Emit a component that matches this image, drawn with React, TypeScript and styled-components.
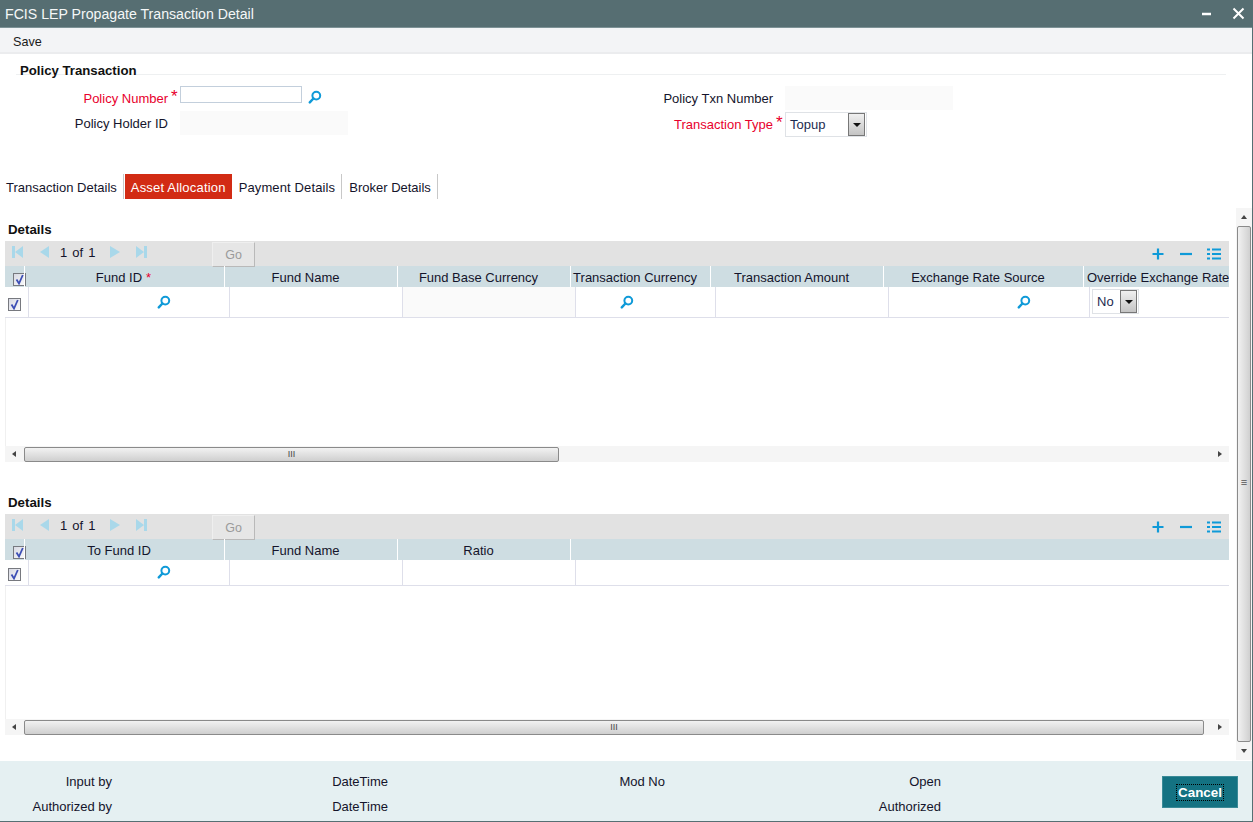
import React from "react";
import styled, { createGlobalStyle } from "styled-components";

const Global = createGlobalStyle`
  html, body { margin: 0; padding: 0; background: #fff; }
  body { font-family: "Liberation Sans", Arial, sans-serif; font-size: 13px; color: #14142b; }
  * { box-sizing: border-box; }
`;

const Page = styled.div`
  width: 1253px; height: 822px; display: flex; flex-direction: column;
  overflow: hidden; background: #fff; border-bottom: 1px solid #566f73; border-right: 1px solid #566f73;
`;
const TitleBar = styled.div`
  height: 28px; flex: none; background: #566e72; color: #f4f7f7; display: flex; align-items: center;
  padding: 0 7px 0 5px; font-size: 14.15px; justify-content: space-between; border-bottom: 1px solid #7d9296;
`;
const WinButtons = styled.div`display: flex; align-items: center; gap: 20px;`;
const MenuBar = styled.div`
  height: 26px; flex: none; background: #f3f4f6; border-bottom: 2px solid #ebecee; padding: 3px 13px 0;
  display: flex; align-items: center; font-size: 12.6px; color: #1a1a1a;
`;
const Section = styled.div`padding: 6px 26px 0 16px; flex: none; height: 120px;`;
const SectionTitle = styled.div`
  font-weight: bold; font-size: 13.2px; height: 15px; line-height: 22px; padding: 0 0 0 4px;
  border-bottom: 1px solid #eef0f1; color: #111;
`;
const FormGrid = styled.div`
  display: grid; grid-template-columns: 604px 1fr; padding-top: 11px;
`;
const FormCol = styled.div`display: flex; flex-direction: column; gap: 1px;`;
const FormRow = styled.div<{ $w: number; $h?: number; $mt?: number }>`
  display: grid; grid-template-columns: ${(p) => p.$w}px 12px auto 1fr; align-items: center;
  height: ${(p) => p.$h ?? 24}px; margin-top: ${(p) => p.$mt ?? 0}px;
`;
const Label = styled.label<{ $req?: boolean }>`
  text-align: right; font-size: 13px; white-space: nowrap; color: ${(p) => (p.$req ? "#e8002d" : "#14142b")};
`;
const Star = styled.span`color: #e8002d; font-size: 17px; line-height: 12px; padding-left: 3px; align-self: start; margin-top: 5px;`;
const TextInput = styled.div`
  width: 122px; height: 17px; background: #fff; border: 1px solid #c3cfdc;
`;
const ReadOnly = styled.div`
  width: 168px; height: 24px; background: #fafafa;
`;
const SearchWrap = styled.span`display: inline-flex; align-items: center; justify-content: center;`;
const SearchNudge = styled.span`display: block; margin-top: 4px;`;
const InputGroup = styled.div`display: flex; align-items: flex-start; gap: 6px; align-self: start;`;
const SelectBox = styled.div<{ $w: number }>`
  width: ${(p) => p.$w}px; height: 25px; border: 1px solid #dfe2e6; background: #fff; display: flex;
  align-items: center; justify-content: space-between; padding: 0 1px 0 4px; font-size: 13px; color: #1c2b50;
`;
const SelectArrow = styled.span`
  width: 17px; height: 23px; border: 1px solid #777; background: linear-gradient(#f0f0f0, #c4c4c4);
  display: flex; align-items: center; justify-content: center;
  &::after { content: ""; border: 4px solid transparent; border-top: 4px solid #111; border-bottom: 0; }
`;
const Tabs = styled.div`display: flex; height: 25px; flex: none;`;
const Tab = styled.div<{ $active?: boolean; $spacing?: number }>`
  padding: ${(p) => (p.$active ? "1px 6px 0" : "1px 6px 0 7px")}; height: 25px; display: flex; align-items: center; font-size: 13px;
  letter-spacing: ${(p) => p.$spacing ?? 0}px;
  margin-left: ${(p) => (p.$active ? "1px" : "0")};
  color: ${(p) => (p.$active ? "#fff" : "#14142b")};
  background: ${(p) => (p.$active ? "#d22b14" : "#fff")};
  border-right: ${(p) => (p.$active ? "0" : "1px solid #c8c8c8")};
  &:first-child { padding-left: 6px; }
`;
const Scroller = styled.div`
  height: 552px; margin-top: 9px; flex: none; display: flex;
`;
const Content = styled.div`width: 1236px; padding-left: 5px; padding-right: 7px;`;
const VBar = styled.div`
  width: 16px; display: flex; flex-direction: column; background: #f5f5f5; flex: none;
`;
const VThumb = styled.div`
  flex: 1; background: linear-gradient(90deg, #f2f2f2, #d0d0d0); border: 1px solid #8a8a8a; border-radius: 2px; 
  display: flex; align-items: center; justify-content: center; font-size: 11px; color: #555; margin: 0 1px; padding-bottom: 4px;
`;
const ArrowBtn = styled.div`
  height: 18px; flex: none; display: flex; align-items: center; justify-content: center;
`;
const Tri = styled.span<{ $dir: "up" | "down" | "left" | "right" }>`
  width: 0; height: 0; border: 3px solid transparent;
  ${(p) => (p.$dir === "up" ? "border-bottom: 4px solid #444; border-top: 0;" : "")}
  ${(p) => (p.$dir === "down" ? "border-top: 4px solid #444; border-bottom: 0;" : "")}
  ${(p) => (p.$dir === "left" ? "border-right: 4px solid #444; border-left: 0;" : "")}
  ${(p) => (p.$dir === "right" ? "border-left: 4px solid #444; border-right: 0;" : "")}
`;
const BlockTitle = styled.div<{ $top: number }>`
  font-weight: bold; font-size: 13.3px; color: #111; padding: ${(p) => p.$top}px 0 0 3px;
  height: ${(p) => p.$top + 19}px; line-height: 15px;
`;
const Toolbar = styled.div`
  height: 25px; background: #e2e2e2; display: flex; align-items: center; padding: 0 8px 0 6px; font-size: 13px;
`;
const Pager = styled.div`display: flex; align-items: center; height: 100%; padding-bottom: 3px;`;
const PageText = styled.span`padding: 0 0 0 9px; word-spacing: 1.5px; color: #14142b; width: 57px; white-space: nowrap;`;
const GoButton = styled.div`
  width: 43px; height: 25px; margin-left: 64px; margin-top: 5px; background: #e6e6e6; border-right: 1px solid #b9b9b9; border-bottom: 1px solid #b9b9b9;
  border-top: 1px solid #efefef; border-left: 1px solid #efefef;
  display: flex; align-items: center; justify-content: center; color: #9a9a9a; font-size: 12.5px;
`;
const ToolIcons = styled.div`margin-left: auto; display: flex; gap: 14px; align-items: center;`;
const HeadRow = styled.div`
  display: grid; height: 21px; background: #cedde2; grid-template-columns: 19px 200px 173px 173px 140px 173px 200px 1fr;
`;
const HeadCell = styled.div`
  border-left: 1px solid #fff; display: flex; align-items: center; justify-content: center; font-size: 13px;
  white-space: nowrap; padding: 1px 11px 0 0; color: #14142b; overflow: hidden;
`;
const LastHeadCell = styled(HeadCell)`justify-content: flex-start; padding: 1px 0 0 3px;`;
const ReqDot = styled.span`color: #e8002d; padding-left: 4px; margin-right: -9px;`;
const DataRow = styled.div<{ $h: number; $cols?: string }>`
  display: grid; height: ${(p) => p.$h}px;
  grid-template-columns: ${(p) => p.$cols ?? "23px 201px 173px 173px 140px 173px 201px 1fr"};
  border-bottom: 1px solid #dedfea; background: #fff;
`;
const DataCell = styled.div<{ $ro?: boolean }>`
  border-left: 1px solid #dedfea; display: flex; align-items: center; justify-content: center; padding-bottom: 1px;
  background: ${(p) => (p.$ro ? "#fafafa" : "#fff")};
`;
const CheckCell = styled.div`display: flex; align-items: center; justify-content: center; padding: 4px 4px 0 0;`;
const SelectCell = styled(DataCell)`justify-content: flex-start; padding-left: 2px;`;
const SearchCell = styled(DataCell)<{ $right?: number }>`padding-left: ${(p) => (p.$right ? 0 : 70)}px; padding-right: ${(p) => p.$right ?? 0}px;`;
const CheckHead = styled.div`display: flex; align-items: center; justify-content: center; padding-left: 10px; padding-top: 5px;`;
const CheckBox = styled.span`
  width: 13px; height: 13px; display: inline-block; border: 1px solid #77797f; background: linear-gradient(135deg, #d8dae4, #fafafa);
`;
const GridBody = styled.div<{ $h: number }>`height: ${(p) => p.$h}px; border-left: 1px solid #f0f0f0;`;
const HBar = styled.div`
  height: 16px; background: #f5f5f5; display: flex; align-items: center; 
`;
const HBtn = styled.div<{ $w: number }>`width: ${(p) => p.$w}px; padding-right: ${(p) => p.$w - 17}px; height: 16px; flex: none; display: flex; align-items: center; justify-content: center;`;
const HThumb = styled.div<{ $w: number }>`
  width: ${(p) => p.$w}px; height: 15px; flex: none; background: linear-gradient(#f2f2f2, #cfcfcf); border: 1px solid #8a8a8a; border-radius: 2px;
  display: flex; align-items: center; justify-content: center; font-size: 9px; color: #444; line-height: 10px;
`;
const HGap = styled.span<{ $w: number }>`width: ${(p) => p.$w}px; flex: none;`;
const Footer = styled.div`
  flex: none; height: 61px; background: #e5f0f2; margin-top: 1px; display: grid; 
  grid-template-columns: 112px 276px 277px 276px 221px 76px; align-items: center; padding-top: 5px;
`;
const FootCol = styled.div`
  display: flex; flex-direction: column; gap: 10px; text-align: right; font-size: 13px; line-height: 15px; color: #14142b; height: 40px;
`;
const FootText = styled.span`display: block; white-space: nowrap; min-height: 15px;`;
const CancelButton = styled.div`
  grid-column: 6; height: 32px; width: 76px; background: #147282; color: #fff; font-weight: bold; font-size: 13.4px;
  display: flex; align-items: center; justify-content: center; margin-top: -4px;
  border: 1px solid #3a8a97;
`;
const CancelText = styled.span`outline: 1px dotted #000; padding: 0 1px;`;
const PagerIconSlot = styled.span<{ $gap: number }>`margin-right: ${(p) => p.$gap}px; display: block;`;
const Svg = styled.svg`display: block;`;

const Search = () => (
  <SearchWrap>
    <svg width="14" height="14" viewBox="0 0 14 14">
      <circle cx="8.3" cy="5.6" r="3.9" fill="none" stroke="#0f9ad8" strokeWidth="2" />
      <path d="M5.4 8.5 1.8 12.4" stroke="#0f9ad8" strokeWidth="2.4" strokeLinecap="round" />
    </svg>
  </SearchWrap>
);

const Check = () => (
  <CheckBox>
    <Svg width="11" height="11" viewBox="0 0 11 11">
      <path d="M2.5 5.5 5 9.5 8.8 1" fill="none" stroke="#3d4fb5" strokeWidth="1.8" />
    </Svg>
  </CheckBox>
);

const PagerIcon = ({ kind }: { kind: "first" | "prev" | "next" | "last" }) => {
  const d = {
    first: "M1 1h3v12H1z M12 1v12L4 7z",
    prev: "M12 1v12L3 7z",
    next: "M2 1v12l10-6z",
    last: "M10 1h3v12h-3z M2 1v12l8-6z",
  }[kind];
  return (
    <Svg width="14" height="14" viewBox="0 0 14 14">
      <path d={d} fill="#a9d8ea" />
    </Svg>
  );
};

const GridToolbar = () => (
  <Toolbar>
    <Pager>
      <PagerIconSlot $gap={12}><PagerIcon kind="first" /></PagerIconSlot>
      <PagerIconSlot $gap={0}><PagerIcon kind="prev" /></PagerIconSlot>
      <PageText>1 of 1</PageText>
      <PagerIconSlot $gap={12}><PagerIcon kind="next" /></PagerIconSlot>
      <PagerIconSlot $gap={0}><PagerIcon kind="last" /></PagerIconSlot>
      <GoButton>Go</GoButton>
    </Pager>
    <ToolIcons>
      <svg width="14" height="14" viewBox="0 0 14 14"><path d="M7 1.5v11M1.5 7h11" stroke="#0f9ad8" strokeWidth="2.2" /></svg>
      <svg width="14" height="14" viewBox="0 0 14 14"><path d="M1 7h12" stroke="#0f9ad8" strokeWidth="2.2" /></svg>
      <svg width="14" height="14" viewBox="0 0 14 14"><path d="M0 2.5h3M5 2.5h9M0 7h3M5 7h9M0 11.5h3M5 11.5h9" stroke="#0f9ad8" strokeWidth="2.2" /></svg>
    </ToolIcons>
  </Toolbar>
);

const HScroll = ({ width, after }: { width: number; after: number }) => (
  <HBar>
    <HBtn $w={19}><Tri $dir="left" /></HBtn>
    <HThumb $w={width}>III</HThumb>
    <HGap $w={after} />
    <HBtn $w={17}><Tri $dir="right" /></HBtn>
  </HBar>
);

export default function App() {
  return (
    <Page>
      <Global />
      <TitleBar>
        <span>FCIS LEP Propagate Transaction Detail</span>
        <WinButtons>
          <svg width="10" height="14" viewBox="0 0 10 14"><path d="M0 7h9" stroke="#fff" strokeWidth="2.5" /></svg>
          <svg width="13" height="13" viewBox="0 0 13 13"><path d="M1.5 1.5l10 10M11.5 1.5l-10 10" stroke="#fff" strokeWidth="2" /></svg>
        </WinButtons>
      </TitleBar>
      <MenuBar>Save</MenuBar>
      <Section>
        <SectionTitle>Policy Transaction</SectionTitle>
        <FormGrid>
          <FormCol>
            <FormRow $w={152}>
              <Label $req>Policy Number</Label>
              <Star>*</Star>
              <InputGroup><TextInput /><SearchNudge><Search /></SearchNudge></InputGroup>
            </FormRow>
            <FormRow $w={152}>
              <Label>Policy Holder ID</Label>
              <span />
              <ReadOnly />
            </FormRow>
          </FormCol>
          <FormCol>
            <FormRow $w={153}>
              <Label>Policy Txn Number</Label>
              <span />
              <ReadOnly />
            </FormRow>
            <FormRow $w={153} $h={25} $mt={1}>
              <Label $req>Transaction Type</Label>
              <Star>*</Star>
              <SelectBox $w={82}>Topup<SelectArrow /></SelectBox>
            </FormRow>
          </FormCol>
        </FormGrid>
      </Section>
      <Tabs>
        <Tab>Transaction Details</Tab>
        <Tab $active $spacing={0.19}>Asset Allocation</Tab>
        <Tab $spacing={0.13}>Payment Details</Tab>
        <Tab>Broker Details</Tab>
      </Tabs>
      <Scroller>
        <Content>
          <BlockTitle $top={14}>Details</BlockTitle>
          <GridToolbar />
          <HeadRow>
            <CheckHead><Check /></CheckHead>
            <HeadCell>Fund ID<ReqDot>*</ReqDot></HeadCell>
            <HeadCell>Fund Name</HeadCell>
            <HeadCell>Fund Base Currency</HeadCell>
            <HeadCell>Transaction Currency</HeadCell>
            <HeadCell>Transaction Amount</HeadCell>
            <HeadCell>Exchange Rate Source</HeadCell>
            <LastHeadCell>Override Exchange Rate</LastHeadCell>
          </HeadRow>
          <DataRow $h={31}>
            <CheckCell><Check /></CheckCell>
            <SearchCell><Search /></SearchCell>
            <DataCell />
            <DataCell $ro />
            <SearchCell $right={38}><Search /></SearchCell>
            <DataCell />
            <SearchCell><Search /></SearchCell>
            <SelectCell><SelectBox $w={47}>No<SelectArrow /></SelectBox></SelectCell>
          </DataRow>
          <GridBody $h={128} />
          <HScroll width={535} after={652} />
          <BlockTitle $top={33}>Details</BlockTitle>
          <GridToolbar />
          <HeadRow>
            <CheckHead><Check /></CheckHead>
            <HeadCell>To Fund ID</HeadCell>
            <HeadCell>Fund Name</HeadCell>
            <HeadCell>Ratio</HeadCell>
            <HeadCell />
          </HeadRow>
          <DataRow $h={26} $cols="23px 201px 173px 173px 1fr">
            <CheckCell><Check /></CheckCell>
            <SearchCell><Search /></SearchCell>
            <DataCell />
            <DataCell />
            <DataCell />
          </DataRow>
          <GridBody $h={133} />
          <HScroll width={1180} after={7} />
        </Content>
        <VBar>
          <ArrowBtn><Tri $dir="up" /></ArrowBtn>
          <VThumb>≡</VThumb>
          <ArrowBtn><Tri $dir="down" /></ArrowBtn>
        </VBar>
      </Scroller>
      <Footer>
        <FootCol><FootText>Input by</FootText><FootText>Authorized by</FootText></FootCol>
        <FootCol><FootText>DateTime</FootText><FootText>DateTime</FootText></FootCol>
        <FootCol><FootText>Mod No</FootText><FootText /></FootCol>
        <FootCol><FootText>Open</FootText><FootText>Authorized</FootText></FootCol>
        <span />
        <CancelButton><CancelText>Cancel</CancelText></CancelButton>
      </Footer>
    </Page>
  );
}
